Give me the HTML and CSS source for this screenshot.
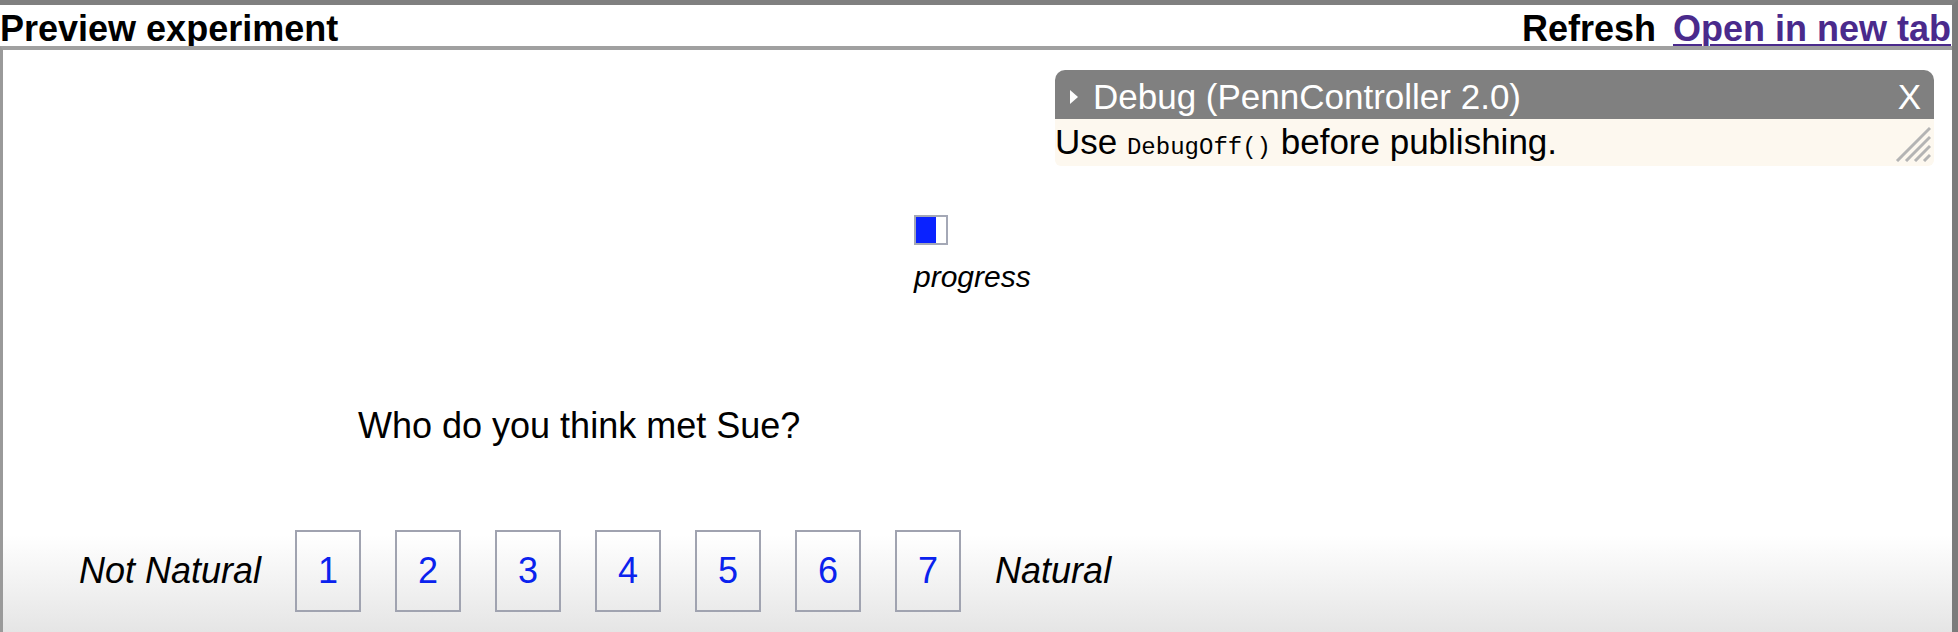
FILE: index.html
```html
<!DOCTYPE html>
<html lang="en">
<head>
    <meta charset="UTF-8">
    <meta name="viewport" content="width=device-width, initial-scale=1.0">
    <title>Preview experiment</title>
    <link rel="stylesheet" href="styles.css">
</head>
<body>

    <div class="window">

        <header class="topbar">
            <span class="title">Preview experiment</span>
            <span class="actions">
                <span class="refresh">Refresh</span>
                <a href="#" class="newtab">Open in new tab</a>
            </span>
        </header>

        <div class="frame">

            <!-- floating debug window -->
            <div class="debug">
                <div class="debug-head">
                    <span class="debug-title"><span class="caret"></span>Debug (PennController 2.0)</span>
                    <span class="debug-close">X</span>
                </div>
                <div class="debug-body">
                    <span>Use <code>DebugOff()</code> before publishing.</span>
                    <svg class="grip" width="36" height="38" viewBox="0 0 36 38">
                        <line x1="2" y1="37" x2="35" y2="4" />
                        <line x1="11" y1="37" x2="35" y2="13" />
                        <line x1="20" y1="37" x2="35" y2="22" />
                        <line x1="29" y1="37" x2="35" y2="31" />
                    </svg>
                </div>
            </div>

            <div class="trial">
                <div class="progress">
                    <div class="progress-bar"><div class="progress-fill" style="width: 66%"></div></div>
                    <div class="progress-label">progress</div>
                </div>

                <p class="question">Who do you think met Sue?</p>

                <div class="scale">
                    <span class="scale-label">Not Natural</span>
                    <span class="scale-option">1</span>
                    <span class="scale-option">2</span>
                    <span class="scale-option">3</span>
                    <span class="scale-option">4</span>
                    <span class="scale-option">5</span>
                    <span class="scale-option">6</span>
                    <span class="scale-option">7</span>
                    <span class="scale-label">Natural</span>
                </div>
            </div>
        </div>
    </div>

</body>
</html>
```

FILE: styles.css
```css
body, html {
    margin: 0;
    padding: 0;
    font-family: "Liberation Sans", Arial, sans-serif;
    background-color: white;
}

.window {
    width: 1958px;
    height: 632px;
    box-sizing: border-box;
    border-top: 5px solid #808080;
    border-right: 6px solid #7b7b7b;
    display: flex;
    flex-direction: column;
    overflow: hidden;
}

/* header row above the preview frame */
.topbar {
    height: 41px;
    box-sizing: border-box;
    padding: 5px 1px 0 0;
    display: flex;
    justify-content: space-between;
    font-size: 36px;
    font-weight: bold;
    line-height: 37px;
    white-space: nowrap;
}

.refresh {
    color: #000;
    margin-right: 7px;
}

.newtab {
    color: #4a2a8c;
    text-decoration: underline;
    text-decoration-thickness: 2px;
    text-underline-offset: 3px;
}

.frame {
    position: relative;
    flex: 1;
    border-top: 4px solid #a0a0a0;
    border-left: 3px solid #9a9a9a;
    background: linear-gradient(to bottom, #ffffff 0, #ffffff 485px, #e5e5e5 100%);
}

/* debug window */
.debug {
    position: absolute;
    top: 20px;
    right: 18px;
    width: 879px;
    border-radius: 10px 10px 6px 6px;
    overflow: hidden;
    font-size: 35px;
}

.debug-head {
    height: 49px;
    box-sizing: border-box;
    padding: 5px 13px 0 15px;
    line-height: 44px;
    background-color: #808080;
    color: white;
    display: flex;
    justify-content: space-between;
}

.debug-title {
    display: flex;
    align-items: center;
}

.caret {
    width: 0;
    height: 0;
    border-left: 8px solid white;
    border-top: 7px solid transparent;
    border-bottom: 7px solid transparent;
    margin: 0 15px 0 0;
}

.debug-body {
    position: relative;
    height: 47px;
    box-sizing: border-box;
    padding-top: 1px;
    line-height: 43px;
    background-color: #fdf8ef;
    color: #000;
}

.debug-body code {
    font-family: "Liberation Mono", "DejaVu Sans Mono", monospace;
    font-size: 24px;
}

.grip {
    position: absolute;
    right: 3px;
    bottom: 4px;
}

.grip line {
    stroke: #b4b4b4;
    stroke-width: 3;
}

/* trial content */
.trial {
    padding-top: 165px;
}

.progress {
    margin-left: 911px;
}

.progress-bar {
    width: 30px;
    height: 26px;
    border: 2px solid #a4a8b6;
    background-color: white;
}

.progress-fill {
    height: 100%;
    background-color: #0a22ff;
}

.progress-label {
    margin-top: 17px;
    font-size: 30px;
    line-height: 30px;
    font-style: italic;
}

.question {
    margin: 116px 0 0 355px;
    font-size: 36px;
    line-height: 36px;
}

.scale {
    display: flex;
    align-items: center;
    gap: 34px;
    margin: 86px 0 0 76px;
    font-size: 36px;
}

.scale-label {
    font-style: italic;
}

.scale-option {
    width: 62px;
    height: 78px;
    border: 2px solid #a0a3b0;
    display: flex;
    justify-content: center;
    align-items: center;
    color: #0a22ee;
}
```
